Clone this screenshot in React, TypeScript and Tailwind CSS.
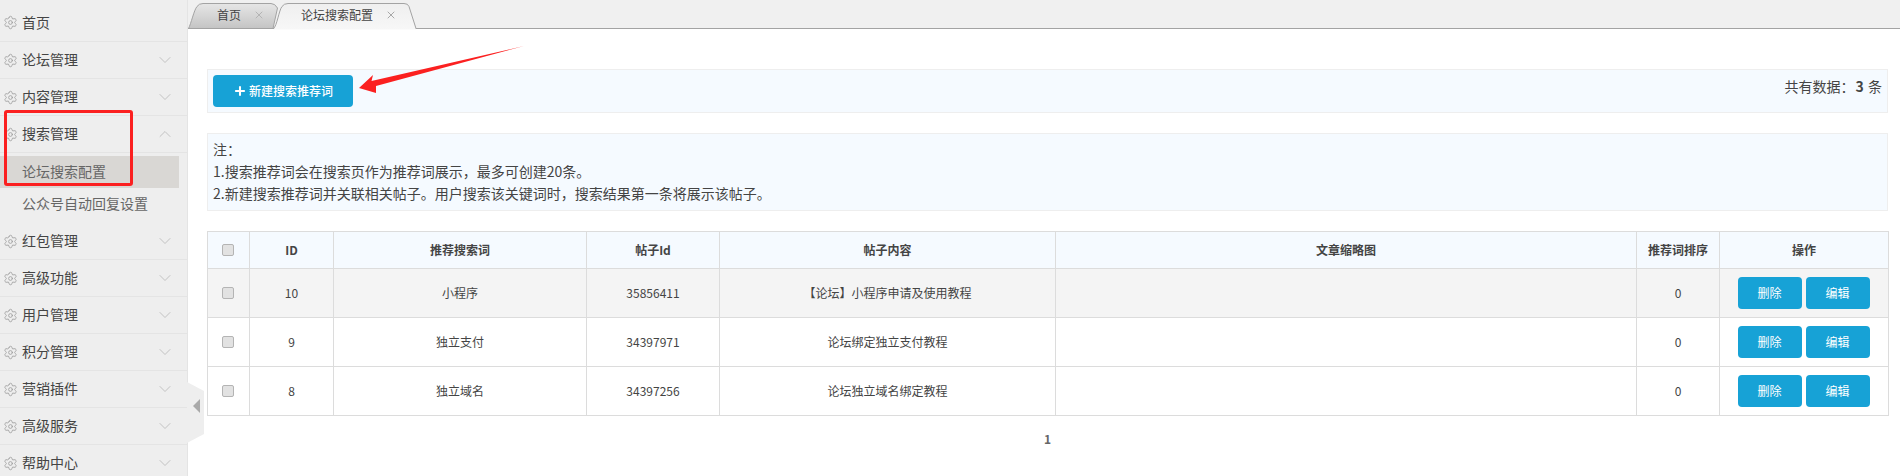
import React from "react";
import { ChevronDown, ChevronUp, Settings, X, Plus } from "lucide-react";

const menu1 = ["首页", "论坛管理", "内容管理"];
const menu2 = ["红包管理", "高级功能", "用户管理", "积分管理", "营销插件", "高级服务", "帮助中心"];
const rows = [
  { id: "10", word: "小程序", pid: "35856411", text: "【论坛】小程序申请及使用教程", bg: "bg-[#f4f4f4]" },
  { id: "9", word: "独立支付", pid: "34397971", text: "论坛绑定独立支付教程", bg: "bg-white" },
  { id: "8", word: "独立域名", pid: "34397256", text: "论坛独立域名绑定教程", bg: "bg-white" },
];

function MenuRow({ label, first, open }: { label: string; first?: boolean; open?: boolean }) {
  return (
    <div className={`flex items-center border-b border-[#e4e4e4] pl-[3px] pr-[12px] ${first ? "h-[42px] pt-[4px]" : "h-[37px]"}`}>
      <Settings size={15} strokeWidth={1.4} className="text-[#a0a0a0] shrink-0" />
      <span className="ml-[4px] pb-[2px] text-[14px] leading-[20px] text-[#444] flex-1">{label}</span>
      {!first &&
        (open ? (
          <ChevronUp size={20} strokeWidth={1.1} className="text-[#bdbdbd]" />
        ) : (
          <ChevronDown size={20} strokeWidth={1.1} className="text-[#bdbdbd]" />
        ))}
    </div>
  );
}

function Check() {
  return <div className="ml-[14px] w-[12px] h-[12px] rounded-[2px] border border-[#b4b4b4] bg-[#e2e2e2]" />;
}

function Btn({ label }: { label: string }) {
  return (
    <button className="w-[64px] h-[32px] rounded-[4px] bg-[#17a2d6] text-white text-[12px] leading-[30px]">{label}</button>
  );
}

export default function App() {
  return (
    <div className="relative flex w-[1900px] h-[476px] overflow-hidden bg-white font-['Noto_Sans_CJK_SC',sans-serif] text-[#444]">
      <aside className="w-[188px] shrink-0 h-full overflow-hidden bg-[#eeeeee] border-r border-[#e4e4e4]">
        {menu1.map((m, i) => (
          <MenuRow key={m} label={m} first={i === 0} />
        ))}
        <MenuRow label="搜索管理" open />
        <div className="h-[70px] pt-[3px]">
          <div className="w-[179px] h-[32px] pl-[22px] bg-[#d9d7d4] text-[14px] leading-[30px] text-[#666]">论坛搜索配置</div>
          <div className="h-[32px] pl-[22px] text-[14px] leading-[30px] text-[#666]">公众号自动回复设置</div>
        </div>
        {menu2.map((m) => (
          <MenuRow key={m} label={m} />
        ))}
      </aside>

      <main className="flex-1 min-w-0">
        <div className="flex h-[29px] bg-[#f0f0f0] border-b border-[#a3a3a3]">
          <div className="relative w-[85px] h-[29px] shrink-0">
            <svg width="92" height="29" className="absolute left-0 top-0">
              <defs>
                <linearGradient id="t1" x1="0" y1="0" x2="0" y2="1">
                  <stop offset="0" stopColor="#e6e6e6" />
                  <stop offset="1" stopColor="#c4c4c4" />
                </linearGradient>
              </defs>
              <path d="M0.5 28.5C3 24 6 10 9 6.5Q11 3.5 15 3.5L83 3.5Q87 3.5 89.5 8L85 28.5Z" fill="url(#t1)" stroke="#a3a3a3" />
            </svg>
            <div className="relative flex items-center h-[29px] pl-[29px] text-[12px] leading-[16px] text-[#444]">
              <span>首页</span>
              <X size={12} strokeWidth={2} className="ml-[12px] text-[#b4b4b4]" />
            </div>
          </div>
          <div className="relative w-[144px] h-[30px] shrink-0">
            <svg width="144" height="30" className="absolute left-0 top-0">
              <defs>
                <linearGradient id="t2" x1="0" y1="0" x2="0" y2="1">
                  <stop offset="0" stopColor="#efefef" />
                  <stop offset="1" stopColor="#f7f7f7" />
                </linearGradient>
              </defs>
              <path d="M0.5 29.5C4 26 6 10 9 6.5Q11 3.5 15 3.5L131 3.5Q135 3.5 136 6.5L143 29.5Z" fill="url(#t2)" />
              <path d="M0.5 28.5C4 26 6 10 9 6.5Q11 3.5 15 3.5L131 3.5Q135 3.5 136 6.5L143 28.5" fill="none" stroke="#a3a3a3" />
            </svg>
            <div className="relative flex items-center h-[29px] pl-[28px] text-[12px] leading-[16px] text-[#444]">
              <span>论坛搜索配置</span>
              <X size={12} strokeWidth={2} className="ml-[12px] text-[#a8a8a8]" />
            </div>
          </div>
        </div>

        <div className="pl-[19px] pr-[12px]">
          <div className="mt-[40px] h-[44px] flex justify-between border border-[#eeeeee] bg-[#f5faff] pl-[5px] pr-[5px] pt-[5px]">
            <button className="flex items-center justify-center w-[140px] h-[32px] rounded-[4px] bg-[#17a2d6] text-white text-[12px] font-medium">
              <Plus size={14} strokeWidth={3.5} className="mr-[2px]" />
              新建搜索推荐词
            </button>
            <div className="text-[14px] leading-[22px] text-[#444]">
              共有数据：<b className="mx-[1px]">3</b> 条
            </div>
          </div>

          <div className="mt-[20px] h-[78px] border border-[#eeeeee] bg-[#f5faff] px-[5px] pt-[4px] text-[14px] leading-[22px] text-[#444]">
            <div>注：</div>
            <div>1.搜索推荐词会在搜索页作为推荐词展示，最多可创建20条。</div>
            <div>2.新建搜索推荐词并关联相关帖子。用户搜索该关键词时，搜索结果第一条将展示该帖子。</div>
          </div>

          <table className="mt-[20px] w-[1681px] table-fixed border-collapse text-center text-[12px] text-[#444]">
            <colgroup>
              <col className="w-[42px]" />
              <col className="w-[84px]" />
              <col className="w-[253px]" />
              <col className="w-[133px]" />
              <col className="w-[336px]" />
              <col className="w-[581px]" />
              <col className="w-[83px]" />
              <col className="w-[169px]" />
            </colgroup>
            <thead>
              <tr className="h-[37px] bg-[#f5faff] font-bold">
                <th className="border border-[#dcdcdc] p-0"><Check /></th>
                <th className="border border-[#dcdcdc] p-0">ID</th>
                <th className="border border-[#dcdcdc] p-0">推荐搜索词</th>
                <th className="border border-[#dcdcdc] p-0">帖子Id</th>
                <th className="border border-[#dcdcdc] p-0">帖子内容</th>
                <th className="border border-[#dcdcdc] p-0">文章缩略图</th>
                <th className="border border-[#dcdcdc] p-0">推荐词排序</th>
                <th className="border border-[#dcdcdc] p-0">操作</th>
              </tr>
            </thead>
            <tbody>
              {rows.map((r) => (
                <tr key={r.id} className={`h-[49px] ${r.bg}`}>
                  <td className="border border-[#dcdcdc] p-0"><Check /></td>
                  <td className="border border-[#dcdcdc] p-0">{r.id}</td>
                  <td className="border border-[#dcdcdc] p-0">{r.word}</td>
                  <td className="border border-[#dcdcdc] p-0">{r.pid}</td>
                  <td className="border border-[#dcdcdc] p-0">{r.text}</td>
                  <td className="border border-[#dcdcdc] p-0"></td>
                  <td className="border border-[#dcdcdc] p-0">0</td>
                  <td className="border border-[#dcdcdc] p-0">
                    <div className="flex justify-center gap-[4px] pr-[1px]">
                      <Btn label="删除" />
                      <Btn label="编辑" />
                    </div>
                  </td>
                </tr>
              ))}
            </tbody>
          </table>

          <div className="mt-[14px] text-center text-[12px] leading-[18px] font-bold text-[#666]">1</div>
        </div>
      </main>

      {/* collapse handle */}
      <svg width="18" height="62" className="absolute left-[187px] top-[382px]">
        <path d="M0 0L17 9V52L0 61Z" fill="#eeeeee" />
        <path d="M6 24L13 17V31Z" fill="#a9a9a9" />
      </svg>

      {/* hand-drawn annotations */}
      <div className="absolute left-[4px] top-[110px] w-[129px] h-[76px] border-[3px] border-[#fb2020] rounded-[3px]" />
      <svg width="180" height="60" className="absolute left-[350px] top-[40px]">
        <path d="M9 48L23 35L21.5 41L174 6L26 46L26 53Z" fill="#fb2020" />
      </svg>
    </div>
  );
}
